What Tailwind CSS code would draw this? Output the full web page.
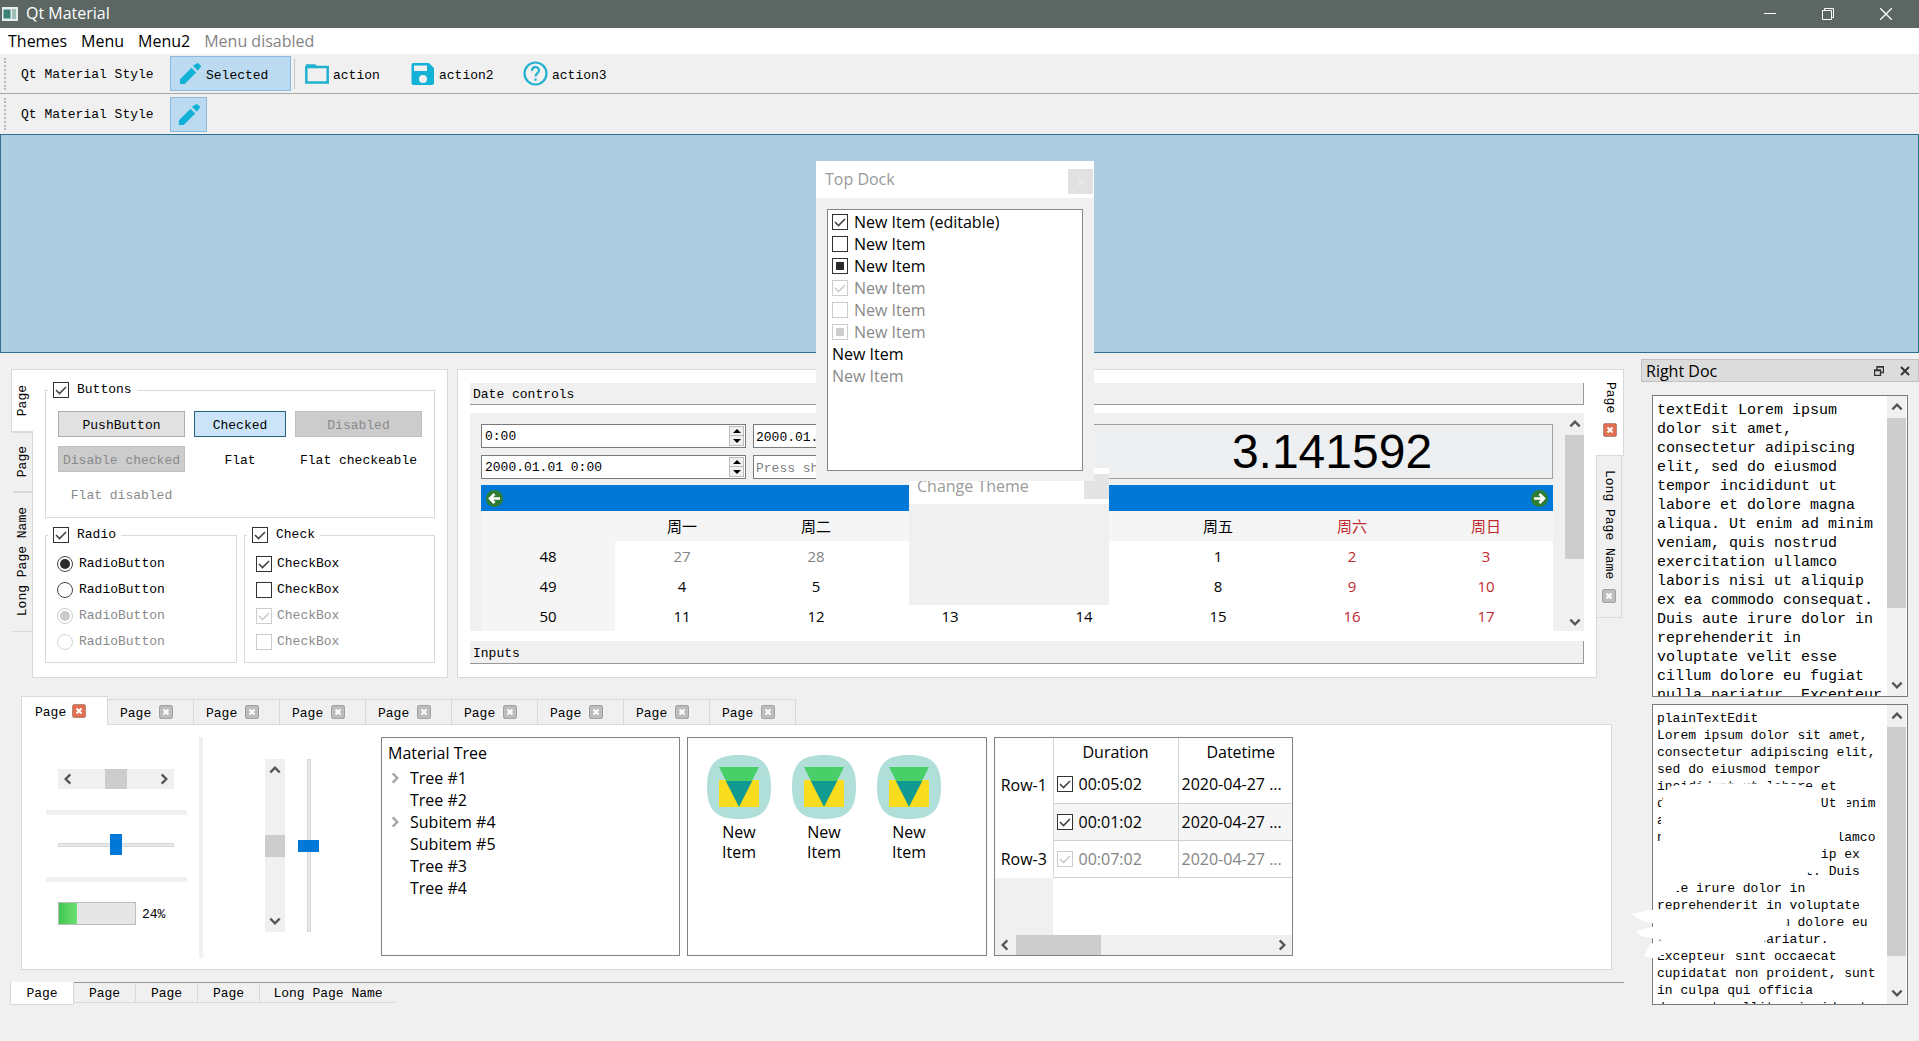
<!DOCTYPE html>
<html lang="en">
<head>
<meta charset="utf-8">
<title>Qt Material</title>
<script src="https://cdn.jsdelivr.net/npm/@tailwindcss/browser@4"></script>
</head>
<body class="relative flex min-h-screen flex-col overflow-x-hidden bg-[#f0f0f0] font-['Liberation_Mono','Noto_Sans_CJK_SC',monospace] text-[13px] leading-4 text-black">

<!-- Shared glyphs -->
<svg class="hidden">
  <symbol id="check" viewBox="0 0 16 16"><path d="M3 8l3.500 3.500L13 5" fill="none" stroke="currentColor" stroke-width="1.600"/></symbol>
  <symbol id="partial" viewBox="0 0 16 16"><path d="M4 4h8v8H4z" fill="currentColor"/></symbol>
  <symbol id="dot" viewBox="0 0 16 16"><circle cx="8" cy="8" r="5" fill="currentColor"/></symbol>
  <symbol id="up" viewBox="0 0 12 12"><path d="M2 8l4-4 4 4" fill="none" stroke="currentColor" stroke-width="2"/></symbol>
  <symbol id="down" viewBox="0 0 12 12"><path d="M2 4l4 4 4-4" fill="none" stroke="currentColor" stroke-width="2"/></symbol>
  <symbol id="left" viewBox="0 0 12 12"><path d="M8 2L4 6l4 4" fill="none" stroke="currentColor" stroke-width="2"/></symbol>
  <symbol id="right" viewBox="0 0 12 12"><path d="M4 2l4 4-4 4" fill="none" stroke="currentColor" stroke-width="2"/></symbol>
  <symbol id="close" viewBox="0 0 14 14"><rect x=".5" y=".5" width="13" height="13" rx="1.500" fill="currentColor" stroke="#000" stroke-opacity=".25"/><path d="M4.500 4.500l5 5m0-5l-5 5" stroke="#fff" stroke-width="2"/></symbol>
  <symbol id="pencil" viewBox="0 0 24 24"><path fill="currentColor" d="M1 18v5h5L18 11 13 6zM18.500 1.500q1-1 2 0l2 2q1 1 0 2L19.500 9l-5-5z"/></symbol>
  <symbol id="material" viewBox="0 0 64 64"><path d="M32 0C54 0 64 8 64 32S54 64 32 64 0 56 0 32 10 0 32 0z" fill="#b0dfda"/><path d="M12 25h40v27H12z" fill="#f8dc1d"/><path d="M12 12h40L45 26H19z" fill="#48cf68"/><path d="M18.800 26h26.400L32 52z" fill="#119a92"/></symbol>
</svg>

<header class="flex h-7 items-center bg-[#5c6663] font-['Open_Sans',sans-serif] text-[16px] text-white">
  <svg class="ml-0.5 h-3.5 w-4" viewBox="0 0 16 14"><path fill="#e8eeec" d="M0 0h16v14H0z"/><path fill="#3d8078" d="M1.500 2.500h7v9h-7z"/><path fill="#9cc0b8" d="M10 2h4v10h-4z"/></svg>
  <h1 class="ml-2 flex-1 pb-0.5">Qt Material</h1>
  <button aria-label="Minimize" class="flex w-[58px] justify-center"><svg class="size-3" viewBox="0 0 12 12"><path d="M0 5.500h12" stroke="#fff"/></svg></button>
  <button aria-label="Restore" class="flex w-[58px] justify-center"><svg class="size-3" viewBox="0 0 12 12" fill="none" stroke="#fff"><path d="M.5 2.500h9v9h-9zM2.500 2.500v-2h9v9h-2"/></svg></button>
  <button aria-label="Close window" class="mr-1 flex w-[58px] justify-center"><svg class="size-3" viewBox="0 0 12 12"><path d="M0 0l12 12M12 0L0 12" stroke="#fff" stroke-width="1.300"/></svg></button>
</header>

<nav class="flex h-[26px] items-center gap-3.5 bg-white pl-2 font-['Open_Sans',sans-serif] text-[16px]">
  <button>Themes</button><button>Menu</button><button>Menu2</button><button disabled class="text-[#848484]">Menu disabled</button>
</nav>

<div class="flex h-10 items-center border-b border-[#a8a8a8] pl-1">
  <span class="h-8 w-0 border-l-2 border-dotted border-[#bbb]"></span>
  <span class="ml-[15px] w-[149px] pt-0.5">Qt Material Style</span>
  <button class="flex h-[35px] w-[121px] items-center gap-1 border border-[#8db9dc] bg-[#bcdbf0] pl-2"><svg class="size-[23px] text-[#12b2d6]"><use href="#pencil"/></svg><span class="pt-1">Selected</span></button>
  <span class="mx-[3px] h-[30px] w-px bg-[#c8c8c8]"></span>
  <button class="flex w-[105px] items-center gap-1 pl-[7px]"><svg class="size-6" viewBox="0 0 24 24" fill="none" stroke="#22b0d0" stroke-width="2.500"><path d="M1.300 20.500V5h21.400v15.500z"/><path d="M1 3.500h8.500l2 2"/></svg><span class="pt-1">action</span></button>
  <button class="flex w-[112px] items-center gap-1 pl-2"><svg class="size-6" viewBox="0 0 24 24"><path fill="#12b2d6" fill-rule="evenodd" d="M2.500 1H18l5 5v15a2 2 0 0 1-2 2H2.500A2 2 0 0 1 .5 21V3a2 2 0 0 1 2-2zM3 3.500V9h13V3.500zM12 13a4 4 0 1 0 0 8 4 4 0 0 0 0-8z"/></svg><span class="pt-1">action2</span></button>
  <button class="flex items-center gap-1 pl-2"><svg class="size-[25px]" viewBox="0 0 25 25" fill="none" stroke="#22b0d0" stroke-width="2.200"><circle cx="12.500" cy="12.500" r="11"/><path d="M9 10c0-5 7-5 7-.5 0 2.500-3.500 2.800-3.500 6M12.500 17.500v2.200"/></svg><span class="pt-1">action3</span></button>
</div>
<div class="flex h-10 items-center pl-1">
  <span class="h-8 w-0 border-l-2 border-dotted border-[#bbb]"></span>
  <span class="ml-[15px] w-[149px] pt-0.5">Qt Material Style</span>
  <button aria-label="Edit" class="flex h-[35px] w-[37px] items-center border border-[#8db9dc] bg-[#bcdbf0] pl-[7px]"><svg class="size-[23px] text-[#12b2d6]"><use href="#pencil"/></svg></button>
</div>

<div class="h-[219px] border border-[#2f6f93] bg-[#aecde0]"></div>

<main class="flex pt-1.5">
  <div class="flex min-w-0 flex-1 flex-col pt-2.5">

    <!-- Upper row -->
    <div class="flex">
      <!-- Left tab widget -->
      <div class="ml-[11px] flex w-[437px]">
        <div role="tablist" class="z-10 -mr-px flex w-[22px] flex-col items-end">
          <button role="tab" class="flex h-[63px] w-full items-center justify-center border border-r-0 border-[#d9d9d9] bg-white [writing-mode:vertical-rl]"><span class="rotate-180">Page</span></button>
          <button role="tab" class="flex h-[60px] w-5 items-center justify-center border-x border-b border-[#d9d9d9] [writing-mode:vertical-rl]"><span class="rotate-180">Page</span></button>
          <button role="tab" class="flex h-[140px] w-5 items-center justify-center border-x border-b border-[#d9d9d9] [writing-mode:vertical-rl]"><span class="rotate-180">Long Page Name</span></button>
        </div>
        <section class="flex h-[309px] flex-1 flex-col gap-[9px] border border-[#d9d9d9] bg-white px-3 pt-3">
          <fieldset class="h-[136px] border border-[#d9d9d9] px-3 pt-[13px]">
            <legend class="-ml-[10px] px-[5px]"><label class="flex items-center gap-2"><span class="grid"><input type="checkbox" checked class="col-start-1 row-start-1 size-4 appearance-none border border-[#333] bg-white"><svg class="pointer-events-none col-start-1 row-start-1 size-4 text-[#444]"><use href="#check"/></svg></span>Buttons</label></legend>
            <div class="grid grid-cols-[127px_92px_127px] gap-[9px]">
              <button class="h-[26px] border border-[#adadad] bg-[#e1e1e1] pt-[3px]">PushButton</button>
              <button aria-pressed="true" class="h-[26px] border border-[#26607f] bg-[#cce4f7] pt-[3px]">Checked</button>
              <button disabled class="h-[26px] border border-[#bfbfbf] bg-[#cccccc] pt-[3px] text-[#8a8a8a]">Disabled</button>
              <button disabled class="h-[26px] border border-[#bfbfbf] bg-[#cccccc] pt-[3px] text-[#8a8a8a]">Disable checked</button>
              <button class="h-[26px] pt-[3px]">Flat</button>
              <button class="h-[26px] whitespace-nowrap pt-[3px]">Flat checkeable</button>
              <button disabled class="h-[26px] pt-[3px] text-[#8a8a8a]">Flat disabled</button>
            </div>
          </fieldset>
          <div class="flex gap-[7px]">
            <fieldset class="h-[136px] w-[192px] border border-[#d9d9d9] px-[11px] pt-[13px]">
              <legend class="-ml-[9px] px-[5px]"><label class="flex items-center gap-2"><span class="grid"><input type="checkbox" checked class="col-start-1 row-start-1 size-4 appearance-none border border-[#333] bg-white"><svg class="pointer-events-none col-start-1 row-start-1 size-4 text-[#444]"><use href="#check"/></svg></span>Radio</label></legend>
              <div class="flex flex-col gap-2.5">
                <label class="flex items-center gap-1.5"><span class="grid"><input type="radio" name="a" checked class="col-start-1 row-start-1 size-4 appearance-none rounded-full border border-[#444]"><svg class="pointer-events-none col-start-1 row-start-1 size-4 text-[#2b2b2b]"><use href="#dot"/></svg></span>RadioButton</label>
                <label class="flex items-center gap-1.5"><input type="radio" name="a" class="size-4 appearance-none rounded-full border border-[#444]">RadioButton</label>
                <label class="flex items-center gap-1.5 text-[#8a8a8a]"><span class="grid"><input type="radio" name="b" checked disabled class="col-start-1 row-start-1 size-4 appearance-none rounded-full border border-[#ccc]"><svg class="pointer-events-none col-start-1 row-start-1 size-4 text-[#ccc]"><use href="#dot"/></svg></span>RadioButton</label>
                <label class="flex items-center gap-1.5 text-[#8a8a8a]"><input type="radio" name="b" disabled class="size-4 appearance-none rounded-full border border-[#d4d4d4]">RadioButton</label>
              </div>
            </fieldset>
            <fieldset class="h-[136px] flex-1 border border-[#d9d9d9] px-[11px] pt-[13px]">
              <legend class="-ml-[9px] px-[5px]"><label class="flex items-center gap-2"><span class="grid"><input type="checkbox" checked class="col-start-1 row-start-1 size-4 appearance-none border border-[#333] bg-white"><svg class="pointer-events-none col-start-1 row-start-1 size-4 text-[#444]"><use href="#check"/></svg></span>Check</label></legend>
              <div class="flex flex-col gap-2.5">
                <label class="flex items-center gap-[5px]"><span class="grid"><input type="checkbox" checked class="col-start-1 row-start-1 size-4 appearance-none border border-[#333]"><svg class="pointer-events-none col-start-1 row-start-1 size-4 text-[#444]"><use href="#check"/></svg></span>CheckBox</label>
                <label class="flex items-center gap-[5px]"><input type="checkbox" class="size-4 appearance-none border border-[#333]">CheckBox</label>
                <label class="flex items-center gap-[5px] text-[#8a8a8a]"><span class="grid"><input type="checkbox" checked disabled class="col-start-1 row-start-1 size-4 appearance-none border border-[#ccc]"><svg class="pointer-events-none col-start-1 row-start-1 size-4 text-[#ccc]"><use href="#check"/></svg></span>CheckBox</label>
                <label class="flex items-center gap-[5px] text-[#8a8a8a]"><input type="checkbox" disabled class="size-4 appearance-none border border-[#ccc]">CheckBox</label>
              </div>
            </fieldset>
          </div>
        </section>
      </div>

      <!-- Date controls tab widget -->
      <div class="ml-[9px] mr-[17px] flex min-w-0 flex-1">
        <section class="flex h-[309px] min-w-0 flex-1 flex-col border border-[#d9d9d9] bg-white px-3 pt-[13px]">
          <button class="h-[22px] border-b border-r border-[#999] bg-[#f0f0f0] pl-[3px] pt-0.5 text-left">Date controls</button>
          <div class="mt-2 flex bg-[#f0f0f0]">
            <div class="flex min-w-0 flex-1 flex-col pl-[11px] pr-3 pt-[11px]">
              <div class="grid grid-cols-[265px_265px_minmax(0,1fr)] gap-x-[7px] gap-y-[7px]">
                <div class="flex h-6 border border-[#7a7a7a] bg-white p-px"><input aria-label="Time" value="0:00" class="min-w-0 flex-1 pl-0.5 pt-0.5"><div class="grid w-[15px] grid-rows-2 border border-[#bbb] bg-[#f0f0f0]"><button aria-label="Increase time" class="flex items-center justify-center border-b border-[#bbb]"><svg class="h-1 w-2" viewBox="0 0 8 4"><path d="M0 4l4-4 4 4z"/></svg></button><button aria-label="Decrease time" class="flex items-center justify-center"><svg class="h-1 w-2" viewBox="0 0 8 4"><path d="M0 0l4 4 4-4z"/></svg></button></div></div>
                <input aria-label="Date" value="2000.01.01" class="h-6 border border-[#7a7a7a] bg-white pl-0.5 pt-0.5">
                <output class="row-span-2 flex h-[55px] items-center justify-center border border-[#a0a0a0] bg-[#eeeff0] font-['Liberation_Sans',sans-serif] text-[48px] leading-[48px]"><span class="ml-[86px]">3.141592</span></output>
                <div class="flex h-6 border border-[#7a7a7a] bg-white p-px"><input aria-label="Date and time" value="2000.01.01 0:00" class="min-w-0 flex-1 pl-0.5 pt-0.5"><div class="grid w-[15px] grid-rows-2 border border-[#bbb] bg-[#f0f0f0]"><button aria-label="Increase date" class="flex items-center justify-center border-b border-[#bbb]"><svg class="h-1 w-2" viewBox="0 0 8 4"><path d="M0 4l4-4 4 4z"/></svg></button><button aria-label="Decrease date" class="flex items-center justify-center"><svg class="h-1 w-2" viewBox="0 0 8 4"><path d="M0 0l4 4 4-4z"/></svg></button></div></div>
                <input aria-label="Shortcut" placeholder="Press shortcut" class="h-6 border border-[#7a7a7a] bg-white pl-0.5 pt-0.5 placeholder:text-[#808080]">
              </div>
              <div class="mt-1.5 flex h-[26px] items-center justify-between bg-[#0078d7] px-[5px]">
                <button aria-label="Previous month"><svg class="size-[17px]" viewBox="0 0 17 17"><circle cx="8.500" cy="8.500" r="8.500" fill="#2f7d32"/><path d="M14 8.500H4M8.500 4L4 8.500 8.500 13" stroke="#fff" stroke-width="2.600" fill="none"/></svg></button>
                <button aria-label="Next month"><svg class="size-[17px]" viewBox="0 0 17 17"><circle cx="8.500" cy="8.500" r="8.500" fill="#2f7d32"/><path d="M3 8.500h10M8.500 4L13 8.500 8.500 13" stroke="#fff" stroke-width="2.600" fill="none"/></svg></button>
              </div>
              <table class="w-full table-fixed bg-white text-center font-['Open_Sans','Noto_Sans_CJK_SC',sans-serif] text-[15px]">
                <thead><tr class="h-[30px] bg-[#f5f5f5] [&>th]:font-normal"><th></th><th>周一</th><th>周二</th><th>周三</th><th>周四</th><th>周五</th><th class="text-[#c0282d]">周六</th><th class="text-[#c0282d]">周日</th></tr></thead>
                <tbody>
                  <tr class="h-[30px]"><th class="bg-[#f5f5f5] font-normal">48</th><td class="text-[#848484]">27</td><td class="text-[#848484]">28</td><td class="text-[#848484]">29</td><td class="text-[#848484]">30</td><td>1</td><td class="text-[#c0282d]">2</td><td class="text-[#c0282d]">3</td></tr>
                  <tr class="h-[30px]"><th class="bg-[#f5f5f5] font-normal">49</th><td>4</td><td>5</td><td>6</td><td>7</td><td>8</td><td class="text-[#c0282d]">9</td><td class="text-[#c0282d]">10</td></tr>
                  <tr class="h-[30px]"><th class="bg-[#f5f5f5] font-normal">50</th><td>11</td><td>12</td><td>13</td><td>14</td><td>15</td><td class="text-[#c0282d]">16</td><td class="text-[#c0282d]">17</td></tr>
                </tbody>
              </table>
            </div>
            <div class="flex w-[19px] flex-col items-center text-[#555]">
              <svg class="my-1 size-3.5"><use href="#up"/></svg>
              <span class="h-[124px] w-full bg-[#cdcdcd]"></span>
              <svg class="mb-0.5 mt-auto size-3.5"><use href="#down"/></svg>
            </div>
          </div>
          <button class="mt-2.5 h-[23px] border-b border-r border-[#999] bg-[#f0f0f0] pl-[3px] pt-[3px] text-left">Inputs</button>
        </section>
        <div role="tablist" class="z-10 -ml-px flex w-7 flex-col items-start">
          <div class="flex h-[87px] w-full flex-col items-center gap-2.5 border border-l-0 border-[#d9d9d9] bg-white pt-3"><button role="tab" class="[writing-mode:vertical-rl]">Page</button><button aria-label="Close tab"><svg class="size-3.5 text-[#e0704f]"><use href="#close"/></svg></button></div>
          <div class="flex h-[162px] w-[26px] flex-col items-center gap-2.5 border border-t-0 border-[#d9d9d9] pt-3.5"><button role="tab" class="[writing-mode:vertical-rl]">Long Page Name</button><button aria-label="Close tab"><svg class="size-3.5 text-[#bdbdbd]"><use href="#close"/></svg></button></div>
        </div>
      </div>
    </div>

    <!-- Lower tab widget -->
    <div class="ml-[21px] mr-[29px] mt-[18px]">
      <div role="tablist" id="tabs" class="relative z-10 -mb-px flex items-end">
        <div class="flex h-[29px] w-[87px] items-center gap-1.5 border border-b-0 border-[#d9d9d9] bg-white pl-[13px]"><button role="tab" aria-selected="true" class="pt-[3px]">Page</button><button aria-label="Close tab"><svg class="size-3.5 text-[#e0704f]"><use href="#close"/></svg></button></div>
      </div>
      <section class="flex h-[246px] gap-[7px] border border-[#d9d9d9] bg-white pt-3">
        <div class="flex h-[221px] w-[181px] shrink-0 flex-col border-r-4 border-[#f0f0f0] pl-6 pr-3">
          <div class="ml-3 mt-8 flex h-5 w-[116px] items-center justify-between bg-[#f0f0f0] px-[3px] text-[#555]"><svg class="size-3.5"><use href="#left"/></svg><span class="h-5 w-[22px] bg-[#cdcdcd]"></span><svg class="size-3.5"><use href="#right"/></svg></div>
          <hr class="mt-[21px] h-[5px] border-0 bg-[#f0f0f0]">
          <input type="range" aria-label="Level" class="ml-3 mt-[19px] h-[21px] w-[116px] appearance-none bg-transparent [&::-webkit-slider-runnable-track]:h-1 [&::-webkit-slider-runnable-track]:border [&::-webkit-slider-runnable-track]:border-[#d6d6d6] [&::-webkit-slider-runnable-track]:bg-[#e7eaea] [&::-webkit-slider-thumb]:-mt-[10px] [&::-webkit-slider-thumb]:h-[21px] [&::-webkit-slider-thumb]:w-3 [&::-webkit-slider-thumb]:appearance-none [&::-webkit-slider-thumb]:bg-[#0078d7]">
          <hr class="mt-[22px] h-[5px] border-0 bg-[#f0f0f0]">
          <label class="ml-3 mt-5 flex items-center gap-1.5"><progress value="24" max="100" class="h-[23px] w-[78px] appearance-none border border-[#bcbcbc] [&::-webkit-progress-bar]:bg-[#e6e6e6] [&::-webkit-progress-value]:bg-linear-to-r [&::-webkit-progress-value]:from-[#3fc650] [&::-webkit-progress-value]:to-[#6ce074]"></progress><span class="pt-0.5">24%</span></label>
        </div>
        <div class="flex w-[164px] shrink-0 gap-[13px] pl-[55px] pt-[22px]">
          <div class="flex h-[173px] w-5 flex-col items-center justify-between bg-[#f0f0f0] py-1 text-[#555]"><svg class="size-3.5"><use href="#up"/></svg><span class="h-[22px] w-full bg-[#cdcdcd]"></span><svg class="size-3.5"><use href="#down"/></svg></div>
          <input type="range" aria-label="Vertical level" class="h-[173px] w-[21px] appearance-none bg-transparent [writing-mode:vertical-lr] [&::-webkit-slider-runnable-track]:w-1 [&::-webkit-slider-runnable-track]:border [&::-webkit-slider-runnable-track]:border-[#d6d6d6] [&::-webkit-slider-runnable-track]:bg-[#e7eaea] [&::-webkit-slider-thumb]:-ml-[10px] [&::-webkit-slider-thumb]:h-3 [&::-webkit-slider-thumb]:w-[21px] [&::-webkit-slider-thumb]:appearance-none [&::-webkit-slider-thumb]:bg-[#0078d7]">
        </div>
        <div class="h-[219px] w-[299px] shrink-0 border border-[#828282] pl-1.5 pt-1 font-['Open_Sans',sans-serif] text-[16px] leading-[22px]">
          <div class="mb-[3px]">Material Tree</div>
          <ul>
            <li class="flex items-center gap-2"><svg class="size-3.5 text-[#a6a6a6]"><use href="#right"/></svg>Tree #1</li>
            <li class="pl-[22px]">Tree #2</li>
            <li class="flex items-center gap-2"><svg class="size-3.5 text-[#a6a6a6]"><use href="#right"/></svg>Subitem #4</li>
            <li class="pl-[22px]">Subitem #5</li>
            <li class="pl-[22px]">Tree #3</li>
            <li class="pl-[22px]">Tree #4</li>
          </ul>
        </div>
        <ul class="flex h-[219px] w-[300px] shrink-0 gap-[21px] border border-[#828282] pl-[19px] pt-[17px] text-center font-['Open_Sans',sans-serif] text-[16px] leading-5">
          <li class="w-16"><svg class="mb-[3px] size-16"><use href="#material"/></svg>New<br>Item</li>
          <li class="w-16"><svg class="mb-[3px] size-16"><use href="#material"/></svg>New<br>Item</li>
          <li class="w-16"><svg class="mb-[3px] size-16"><use href="#material"/></svg>New<br>Item</li>
        </ul>
        <div class="flex h-[219px] w-[299px] shrink-0 flex-col overflow-hidden border border-[#828282] font-['Open_Sans',sans-serif] text-[16px]">
          <table class="w-[308px] table-fixed border-collapse">
            <colgroup><col class="w-[58px]"><col class="w-[125px]"><col class="w-[125px]"></colgroup>
            <thead><tr class="h-7 [&>th]:font-normal"><th class="border-r border-[#d9d9d9]"></th><th class="border-r border-[#d9d9d9]">Duration</th><th>Datetime</th></tr></thead>
            <tbody>
              <tr class="h-[37px]"><th class="border-r border-[#d9d9d9] font-normal">Row-1</th><td class="border-b border-r border-[#d0d0d0] pl-[3px]"><label class="flex items-center gap-1.5"><span class="grid"><input type="checkbox" checked class="col-start-1 row-start-1 size-4 appearance-none border border-[#333] bg-white"><svg class="pointer-events-none col-start-1 row-start-1 size-4 text-[#444]"><use href="#check"/></svg></span>00:05:02</label></td><td class="border-b border-[#d0d0d0] pl-[3px]">2020-04-27 ...</td></tr>
              <tr class="h-[37px]"><th class="border-r border-[#d9d9d9]"></th><td class="border-b border-r border-[#d0d0d0] bg-[#f6f5f6] pl-[3px]"><label class="flex items-center gap-1.5"><span class="grid"><input type="checkbox" checked class="col-start-1 row-start-1 size-4 appearance-none border border-[#333] bg-white"><svg class="pointer-events-none col-start-1 row-start-1 size-4 text-[#444]"><use href="#check"/></svg></span>00:01:02</label></td><td class="border-b border-[#d0d0d0] bg-[#f6f5f6] pl-[3px]">2020-04-27 ...</td></tr>
              <tr class="h-[37px]"><th class="border-r border-[#d9d9d9] font-normal">Row-3</th><td class="border-b border-r border-[#d0d0d0] pl-[3px] text-[#848484]"><label class="flex items-center gap-1.5"><span class="grid"><input type="checkbox" checked disabled class="col-start-1 row-start-1 size-4 appearance-none border border-[#ccc]"><svg class="pointer-events-none col-start-1 row-start-1 size-4 text-[#ccc]"><use href="#check"/></svg></span>00:07:02</label></td><td class="border-b border-[#d0d0d0] pl-[3px] text-[#848484]">2020-04-27 ...</td></tr>
            </tbody>
          </table>
          <div class="w-[58px] flex-1 bg-[#f0f0f0]"></div>
          <div class="flex h-5 items-center bg-[#f0f0f0] px-[3px] text-[#555]"><svg class="mr-1 size-3.5"><use href="#left"/></svg><span class="h-full w-[85px] bg-[#cdcdcd]"></span><svg class="ml-auto size-3.5"><use href="#right"/></svg></div>
        </div>
      </section>
    </div>

    <!-- Bottom tab bar -->
    <div role="tablist" class="ml-2.5 mr-[17px] mt-3 flex border-t border-[#999]">
      <button role="tab" class="-mt-px h-[23px] w-16 border border-t-0 border-[#d9d9d9] bg-white pt-0.5">Page</button>
      <button role="tab" class="h-5 w-[62px] border-b border-r border-[#d9d9d9] pt-0.5">Page</button>
      <button role="tab" class="h-5 w-[62px] border-b border-r border-[#d9d9d9] pt-0.5">Page</button>
      <button role="tab" class="h-5 w-[62px] border-b border-r border-[#d9d9d9] pt-0.5">Page</button>
      <button role="tab" class="h-5 w-[136px] border-b border-[#d9d9d9] pt-0.5">Long Page Name</button>
    </div>
  </div>

  <!-- Right dock -->
  <aside class="relative w-[278px] shrink-0">
    <div class="flex h-[23px] items-center border border-[#c2c2c2] bg-[#dcdcdc] pl-1 pr-2 font-['Open_Sans',sans-serif] text-[16px]">
      <h2 class="flex-1">Right Doc</h2>
      <button aria-label="Float" class="mr-4"><svg class="size-2.5" viewBox="0 0 10 10" fill="none" stroke="#333"><path d="M.5 4h6v5.500h-6zM.5 4.500h6M3 3.500V.5h6.500v6H7M3 1h6.500" stroke-width="1.400"/></svg></button>
      <button aria-label="Close dock"><svg class="size-2.5" viewBox="0 0 10 10"><path d="M1 1l8 8M9 1L1 9" stroke="#333" stroke-width="2"/></svg></button>
    </div>
    <div class="mx-[11px] mt-[13px] flex h-[302px] border border-[#7a7a7a] bg-white">
      <textarea aria-label="Text edit" wrap="off" class="min-w-0 flex-1 resize-none overflow-hidden whitespace-pre pl-1 pt-[5px] text-[15px] leading-[19px]">textEdit Lorem ipsum
dolor sit amet,
consectetur adipiscing
elit, sed do eiusmod
tempor incididunt ut
labore et dolore magna
aliqua. Ut enim ad minim
veniam, quis nostrud
exercitation ullamco
laboris nisi ut aliquip
ex ea commodo consequat.
Duis aute irure dolor in
reprehenderit in
voluptate velit esse
cillum dolore eu fugiat
nulla pariatur. Excepteur</textarea>
      <div class="mr-px flex w-[19px] flex-col items-center bg-[#f0f0f0] text-[#555]"><svg class="my-1 size-3.5"><use href="#up"/></svg><span class="h-[190px] w-full bg-[#cdcdcd]"></span><svg class="mb-1 mt-auto size-3.5"><use href="#down"/></svg></div>
    </div>
    <div class="mx-[11px] mt-[7px] flex h-[301px] border border-[#7a7a7a] bg-white">
      <textarea aria-label="Plain text edit" wrap="off" class="min-w-0 flex-1 resize-none overflow-hidden whitespace-pre pl-1 pt-[5px] leading-[17px]">plainTextEdit
Lorem ipsum dolor sit amet,
consectetur adipiscing elit,
sed do eiusmod tempor
incididunt ut labore et
dolore magna aliqua. Ut enim
ad minim veniam, quis
nostrud exercitation ullamco
laboris nisi ut aliquip ex
ea commodo consequat. Duis
aute irure dolor in
reprehenderit in voluptate
velit esse cillum dolore eu
fugiat nulla pariatur.
Excepteur sint occaecat
cupidatat non proident, sunt
in culpa qui officia
deserunt mollit anim id est</textarea>
      <div class="mr-px flex w-[19px] flex-col items-center bg-[#f0f0f0] text-[#555]"><svg class="my-1 size-3.5"><use href="#up"/></svg><span class="h-[229px] w-full bg-[#cdcdcd]"></span><svg class="mb-1 mt-auto size-3.5"><use href="#down"/></svg></div>
    </div>
    <!-- White brush strokes over the plain text -->
    <svg class="pointer-events-none absolute -left-5 top-[421px] h-[190px] w-[260px]" viewBox="0 0 260 190" fill="#fff">
      <path d="M50 6L85 3l90 1 18 5 6 8 3 15 22-2 16 4 2 10-22 6-6 14-14 6-2 14-10 8-8 10H62l-8 12-16 6-4-6V68l6-6V22z"/>
      <path d="M216 15l10-1v14l-10 2z"/>
      <path d="M10 134l18-4h125l14 4-2 14-12 4-10 10 20 8-60 4-56-3-12 8-12-3 6-12 12-4-22-4-4-5 24-6-17-4z"/>
    </svg>
  </aside>
</main>

<!-- Floating windows -->
<section class="absolute left-[909px] top-[468px] w-[200px] bg-[#f0f0f0] font-['Open_Sans',sans-serif] text-[16px]">
  <div class="flex h-9 items-center justify-between bg-white pl-2 text-[#9a9a9a]"><h2>Change Theme</h2><button aria-label="Close theme window" class="size-[25px] bg-[#e4e4e4]"></button></div>
  <div class="h-[101px]"></div>
</section>
<section class="absolute left-[816px] top-[161px] w-[278px] bg-[#f0f0f0] pb-2.5 font-['Open_Sans',sans-serif] text-[16px]">
  <div class="flex h-[37px] items-center justify-between bg-white pl-[9px] pr-px text-[#9a9a9a]"><h2 class="pb-0.5">Top Dock</h2><button aria-label="Close top dock" class="mt-1 flex size-[25px] items-center justify-center bg-[#e1e1e1]"><svg class="size-2" viewBox="0 0 8 8"><path d="M0 0l8 8M8 0L0 8" stroke="#e9e9e9" stroke-width="2"/></svg></button></div>
  <ul class="mx-[11px] mt-[11px] h-[262px] border border-[#828790] bg-white pl-1 pt-px leading-[22px]">
    <li><label class="flex items-center gap-1.5"><span class="grid"><input type="checkbox" checked class="col-start-1 row-start-1 size-4 appearance-none border border-[#333]"><svg class="pointer-events-none col-start-1 row-start-1 size-4 text-[#444]"><use href="#check"/></svg></span>New Item (editable)</label></li>
    <li><label class="flex items-center gap-1.5"><input type="checkbox" class="size-4 appearance-none border border-[#333]">New Item</label></li>
    <li><label class="flex items-center gap-1.5"><span class="grid"><input type="checkbox" class="col-start-1 row-start-1 size-4 appearance-none border border-[#333]"><svg class="pointer-events-none col-start-1 row-start-1 size-4 text-[#2b2b2b]"><use href="#partial"/></svg></span>New Item</label></li>
    <li><label class="flex items-center gap-1.5 text-[#8a8a8a]"><span class="grid"><input type="checkbox" checked disabled class="col-start-1 row-start-1 size-4 appearance-none border border-[#ccc]"><svg class="pointer-events-none col-start-1 row-start-1 size-4 text-[#ccc]"><use href="#check"/></svg></span>New Item</label></li>
    <li><label class="flex items-center gap-1.5 text-[#8a8a8a]"><input type="checkbox" disabled class="size-4 appearance-none border border-[#ccc]">New Item</label></li>
    <li><label class="flex items-center gap-1.5 text-[#8a8a8a]"><span class="grid"><input type="checkbox" disabled class="col-start-1 row-start-1 size-4 appearance-none border border-[#ccc]"><svg class="pointer-events-none col-start-1 row-start-1 size-4 text-[#ccc]"><use href="#partial"/></svg></span>New Item</label></li>
    <li>New Item</li>
    <li class="text-[#8a8a8a]">New Item</li>
  </ul>
</section>

<script>
  // The remaining eight tabs are identical
  const tabs = document.getElementById('tabs');
  for (let i = 0; i < 8; i++) {
    tabs.insertAdjacentHTML('beforeend', '<div class="flex h-[26px] w-[86px] items-center gap-2 border-b border-r border-t border-[#d9d9d9] pl-3"><button role="tab" class="pt-[3px]">Page</button><button aria-label="Close tab"><svg class="size-3.5 text-[#bdbdbd]"><use href="#close"/></svg></button></div>');
  }
</script>
</body>
</html>
